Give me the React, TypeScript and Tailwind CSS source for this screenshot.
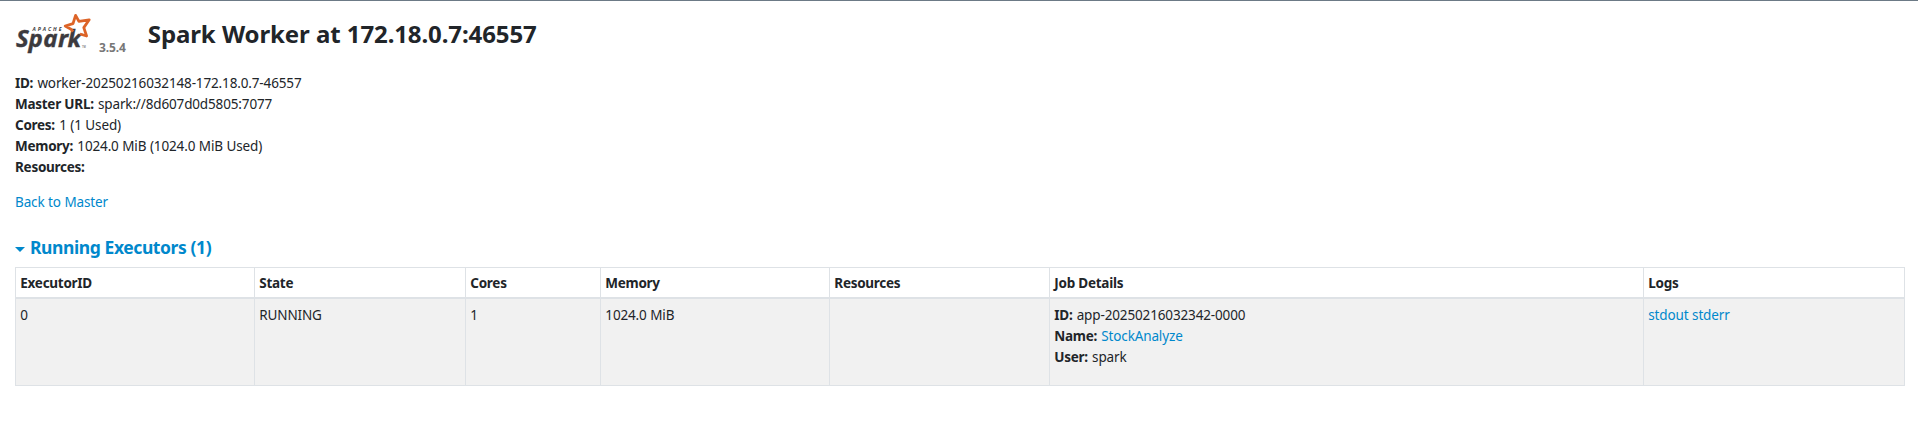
import type { ReactNode } from "react";

const LINK = "text-[#0088cc]";

function Logo() {
  return (
    <svg width="80" height="44" viewBox="0 0 80 44" className="shrink-0 overflow-visible">
      <g fill="#3c3a3e" fontFamily="'Open Sans', sans-serif" letterSpacing="0" wordSpacing="0">
        <text x="0.9 13.6 28.2 43 52.6" y="35.4" fontSize="24" fontWeight="700" fontStyle="italic" stroke="#3c3a3e" strokeWidth="0.4">Spark</text>
        <text x="17.5" y="19.2" fontSize="5.2" fontWeight="700" fontStyle="italic" textLength="29" lengthAdjust="spacing">APACHE</text>
        <text x="67" y="36" fontSize="2.6">TM</text>
      </g>
      <path d="M58 19.6 L56 17.2 L50.2 14 L58 11.6 L60.6 3.4 L63.9 9.4 L74.2 7.8 L68.8 15.6 L71.6 24 L65 22" fill="none" stroke="#dd6428" strokeWidth="2.8" strokeLinejoin="round" />
    </svg>
  );
}

function Field({ label, children }: { label: string; children?: ReactNode }) {
  return (
    <li className="h-[21px]">
      <strong className="mr-[0.7px] font-bold tracking-[-0.27px]">{label}</strong> {children}
    </li>
  );
}

const columns = [
  { name: "ExecutorID", width: "w-[239px]" },
  { name: "State", width: "w-[211px]" },
  { name: "Cores", width: "w-[135px]" },
  { name: "Memory", width: "w-[229px]" },
  { name: "Resources", width: "w-[220px]" },
  { name: "Job Details", width: "w-[594px]" },
  { name: "Logs", width: "w-[261px]" },
];

const cell = "border border-[#dee2e6] px-[4.3px] pt-[6px] align-top";

export default function App() {
  return (
    <div className="h-[447px] border-t border-[#6c7a86] bg-white px-[15px] font-['Noto_Sans',sans-serif] text-[13.5px] leading-[21px] tracking-[-0.14px] text-[#212529] [word-spacing:0.2px]">
      <header className="flex h-[72px] items-start">
        <div className="flex pt-[11px]">
          <Logo />
          <span className="ml-1 mt-[25px] text-[12px] font-bold tracking-[-0.1px] text-[#777777]">3.5.4</span>
        </div>
        <h3 className="ml-[22px] mt-[18px] whitespace-nowrap text-[24px] font-bold leading-[29px] tracking-[-0.12px]">Spark Worker at 172.18.0.7:46557</h3>
      </header>

      <ul className="mb-[14px]">
        <Field label="ID:">worker-20250216032148-172.18.0.7-46557</Field>
        <Field label="Master URL:">spark://8d607d0d5805:7077</Field>
        <Field label="Cores:">1 (1 Used)</Field>
        <Field label="Memory:">1024.0 MiB (1024.0 MiB Used)</Field>
        <Field label="Resources:" />
      </ul>
      <p>
        <a href="#" className={LINK}>Back to Master</a>
      </p>

      <h4 className="mt-[21px] flex h-[27px] items-center text-[17.5px] font-bold tracking-[-0.43px]">
        <a href="#" className="flex items-center text-[#0088cc]">
          <span className="mr-[5px] mt-[3px] border-x-[5px] border-t-[5px] border-x-transparent border-t-[#0088cc]" />
          Running Executors (1)
        </a>
      </h4>

      <table className="mt-[6px] w-[1890px] table-fixed border-collapse text-left">
        <thead>
          <tr className="h-[30px]">
            {columns.map((c) => (
              <th key={c.name} className={`${c.width} border border-b-2 border-[#dee2e6] px-[4.3px] pt-[3px] font-bold tracking-[-0.27px]`}>{c.name}</th>
            ))}
          </tr>
        </thead>
        <tbody>
          <tr className="h-[88px] bg-[#f1f1f1]">
            <td className={cell}>0</td>
            <td className={cell}>RUNNING</td>
            <td className={cell}>1</td>
            <td className={cell}>1024.0 MiB</td>
            <td className={cell} />
            <td className={cell}>
              <ul>
                <Field label="ID:">app-20250216032342-0000</Field>
                <Field label="Name:"><a href="#" className={LINK}>StockAnalyze</a></Field>
                <Field label="User:">spark</Field>
              </ul>
            </td>
            <td className={cell}>
              <a href="#" className={LINK}>stdout</a> <a href="#" className={LINK}>stderr</a>
            </td>
          </tr>
        </tbody>
      </table>
    </div>
  );
}
